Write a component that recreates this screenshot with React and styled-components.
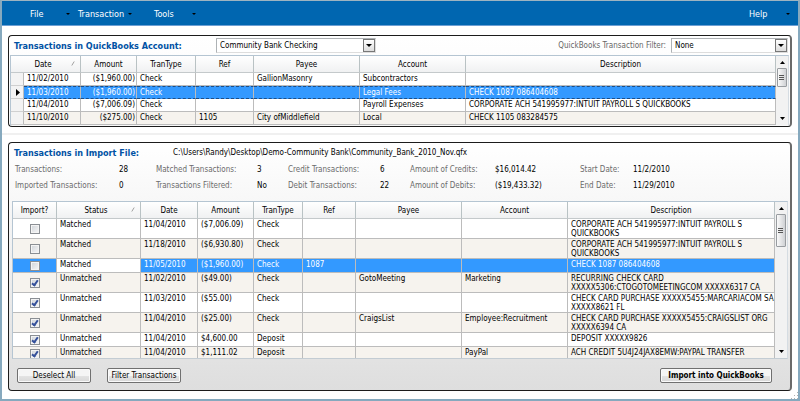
import React from "react";
import styled, { createGlobalStyle } from "styled-components";

const GlobalStyle = createGlobalStyle`
  *, *::before, *::after { box-sizing: border-box; }
  html, body, #root { height: 100%; }
  body {
    margin: 0;
    overflow: hidden;
    color: #000;
    font: 8px/9px "DejaVu Sans Condensed", "Noto Sans", Tahoma, sans-serif;
  }
  button, input, select { font: inherit; color: inherit; margin: 0; }
`;

const Window = styled.div`
  display: flex;
  flex-direction: column;
  height: 100vh;
  background: #fff;
  border: 2px solid #86a9be;
  border-top: 1px solid #9db4c1;
`;

const MenuBar = styled.nav`
  display: flex;
  flex: none;
  height: 25px;
  padding: 1px 8px 0 28px;
  background: #0066b0;
  border-bottom: 1px solid #6d9fd4;
`;

const MenuButton = styled.button`
  display: flex;
  align-items: center;
  justify-content: space-between;
  width: ${(p) => p.$width}px;
  margin-left: ${(p) => (p.$end ? "auto" : "0")};
  margin-right: ${(p) => p.$gap || 0}px;
  padding: 0;
  border: 0;
  background: none;
  color: #fff;
  font-size: 9px;
  line-height: 12px;
`;

const MenuItems = styled.div`
  display: flex;
`;

const Caret = styled.svg`
  width: ${(p) => p.$size || 5}px;
  height: ${(p) => (p.$size === 4 ? 2 : 3)}px;
  flex: none;
  fill: #000;
`;

const Content = styled.main`
  display: flex;
  flex: 1;
  flex-direction: column;
  min-height: 0;
`;

const AccountSection = styled.section`
  flex: none;
  padding: 9px 6px 6px;
  border-bottom: 2px solid #f0f0f0;
`;

const ImportSection = styled.section`
  display: flex;
  flex: 1;
  min-height: 0;
  padding: 7px 6px 8px;
`;

const Panel = styled.div`
  display: flex;
  flex: 1;
  flex-direction: column;
  min-width: 0;
  border: 1px solid #1c1c1c;
  border-right: 2px solid #6a6a6a;
  border-radius: 4px;
  background: linear-gradient(#fff, ${(p) => p.$shade});
`;

const PanelHead = styled.div`
  display: flex;
  align-items: center;
  height: 19px;
  padding: 0 2px 0 5px;
`;

const Title = styled.h2`
  width: ${(p) => p.$width}px;
  margin: 0;
  color: #0052a4;
  font-size: 9px;
  line-height: 12px;
`;

const FilterLabel = styled.label`
  margin-left: auto;
  padding-right: 5px;
  color: #666;
`;

const SelectBox = styled.span`
  display: grid;
  width: ${(p) => p.$width}px;
  height: 15px;
  border: 1px solid #aeb2b5;
  border-right-color: #ddd;
  border-bottom-color: #ddd;
  background: #fff;

  > * { grid-area: 1 / 1; }
`;

const Select = styled.select`
  appearance: none;
  width: 100%;
  padding: 0 16px 0 3px;
  border: 0;
  border-radius: 0;
  background: none;
`;

const SelectArrow = styled.span`
  display: grid;
  place-items: center;
  justify-self: end;
  width: 12px;
  height: 13px;
  border: 1px solid #777;
  background: linear-gradient(#fff, #ddd);
  pointer-events: none;
`;

const GridFrame = styled.div`
  display: flex;
  flex: ${(p) => (p.$fill ? "1" : "none")};
  min-height: 0;
  margin: ${(p) => (p.$fill ? "0 2px 0 3px" : "0 1px")};
  overflow: hidden;
  border: 1px solid #b5c5d2;
  border-right-color: #d5dce2;
  border-bottom-color: ${(p) => (p.$fill ? "#c3ccd3" : "transparent")};
`;

const TableWrap = styled.div`
  flex: 1;
  min-width: 0;
`;

const Table = styled.table`
  width: 100%;
  table-layout: fixed;
  border-spacing: 0;
`;

const Col = styled.col`
  width: ${(p) => (p.$width ? `${p.$width}px` : "auto")};
`;

const HeadCell = styled.th`
  position: relative;
  height: 17px;
  padding: 0 ${(p) => p.$inset}px 0 0;
  border-right: ${(p) => (p.$blank ? "0" : "1px solid #b9c2c4")};
  border-bottom: 1px solid #c4c9cb;
  background: linear-gradient(#fff, #f0f1f2);
  font-weight: normal;
  text-align: center;
`;

const SortMark = styled.svg`
  position: absolute;
  right: 5px;
  top: 5px;
  width: 4px;
  height: 5px;
  stroke: #8a8a8a;
`;

const Row = styled.tr`
  background: ${(p) => (p.$selected ? "#3399ff" : p.$tint ? "#f6f3ee" : "#fff")};
  color: ${(p) => (p.$selected ? "#fff" : "#000")};
`;

const Cell = styled.td`
  height: ${(p) => p.$height}px;
  padding: 1px 1px 0 3px;
  border-right: 1px solid #bcbcbc;
  border-bottom: 1px solid #bcbcbc;
  text-align: ${(p) => p.$align || "left"};
  vertical-align: top;
  white-space: pre;
  ${(p) => p.$plain && "background: #fff; color: #000;"}
  ${(p) => p.$focus && `
    border-top: 1px dashed #1d4e86;
    border-bottom: 1px dashed #1d4e86;
  `}
`;

const Selector = styled.td`
  height: 13px;
  padding: 0 0 0 5px;
  border-right: 1px solid #bcbcbc;
  border-bottom: 1px solid #d0d0d0;
  background: #f3f3f3;
  line-height: 0;
  vertical-align: middle;
`;

const Pointer = styled.svg`
  width: 4px;
  height: 7px;
`;

const CheckCell = styled.td`
  padding: 0;
  border-right: 1px solid #bcbcbc;
  border-bottom: 1px solid #bcbcbc;
  line-height: 0;
  text-align: center;
  vertical-align: middle;
`;

const CheckBox = styled.input`
  appearance: none;
  display: inline-grid;
  place-items: center;
  width: 10px;
  height: 10px;
  border: 1px solid #8b8f94;
  background: linear-gradient(135deg, #cfd3d8, #f8f8f8);
  box-shadow: inset 0 0 0 1px #f4f4f4;
  vertical-align: middle;

  &:checked::before {
    content: "";
    width: 4px;
    height: 7px;
    border: solid #34509a;
    border-width: 0 2px 2px 0;
    transform: rotate(35deg);
  }
`;

const ScrollTrack = styled.div`
  display: flex;
  flex: none;
  flex-direction: column;
  align-items: center;
  width: 12px;
  padding: 5px 0;
  background: #f2f2f2;
`;

const ScrollThumb = styled.div`
  display: grid;
  place-items: center;
  width: 10px;
  height: ${(p) => p.$height}px;
  margin: 4px 0 auto;
  border: 1px solid #989ca0;
  border-radius: 1px;
  background: linear-gradient(90deg, #fafafa, #cfd1d4);
`;

const Stats = styled.dl`
  display: grid;
  grid-template-columns: 104px 37px 101px 31px 92px 30px 85px 85px 53px auto;
  grid-auto-rows: 16px;
  margin: 0 0 7px;
  padding-left: 6px;
  line-height: 16px;
`;

const StatLabel = styled.dt`
  color: #6b6b6b;
`;

const StatValue = styled.dd`
  margin: 0;
`;

const Actions = styled.div`
  display: flex;
  gap: 16px;
  padding: 9px 18px 7px 8px;
`;

const ActionButton = styled.button`
  width: ${(p) => p.$width}px;
  height: 15px;
  margin-left: ${(p) => (p.$primary ? "auto" : "0")};
  padding: 0;
  border: 1px solid #707070;
  border-radius: 2px;
  background: linear-gradient(#f5f5f5 50%, #e4e4e4 50%, #d8d8d8);
  box-shadow: inset 0 0 0 1px #fafafa;
  font-weight: ${(p) => (p.$primary ? "bold" : "normal")};
  white-space: nowrap;
`;

const ResizeCorner = styled.div`
  position: absolute;
  right: 2px;
  bottom: 2px;
  line-height: 0;
`;

const Grip = styled.svg`
  width: 7px;
  height: 7px;
  fill: #b0b0b0;
`;

const Down = ({ size }) => (
  <Caret $size={size} viewBox="0 0 6 3" preserveAspectRatio="none" aria-hidden="true"><path d="M0 0h6L3 3z" /></Caret>
);
const Up = () => (
  <Caret viewBox="0 0 6 3" preserveAspectRatio="none" aria-hidden="true"><path d="M0 3h6L3 0z" /></Caret>
);

function ScrollBar({ thumb }) {
  return (
    <ScrollTrack>
      <Up />
      <ScrollThumb $height={thumb}>
        <svg width="6" height="7" aria-hidden="true">
          <path d="M0 1.5h5M0 3.5h5M0 5.5h5" stroke="#555" />
        </svg>
      </ScrollThumb>
      <Down />
    </ScrollTrack>
  );
}

function Head({ labels, sorted, inset }) {
  return (
    <thead>
      <tr>
        {labels.map((label, i) => (
          <HeadCell key={i} scope="col" $inset={label === sorted ? inset : 0} $blank={!label}>
            {label}
            {label === sorted && (
              <SortMark viewBox="0 0 5 6" aria-hidden="true"><path d="M1 5.5L4 .5" fill="none" /></SortMark>
            )}
          </HeadCell>
        ))}
      </tr>
    </thead>
  );
}

function ComboBox({ id, label, width, value }) {
  return (
    <SelectBox $width={width}>
      <Select id={id} aria-label={label} defaultValue={value}>
        <option>{value}</option>
      </Select>
      <SelectArrow><Down size={6} /></SelectArrow>
    </SelectBox>
  );
}

const accountRows = [
  ["11/02/2010", "($1,960.00)", "Check", "", "GallionMasonry", "Subcontractors", ""],
  ["11/03/2010", "($1,960.00)", "Check", "", "", "Legal Fees", "CHECK 1087 086404608"],
  ["11/04/2010", "($7,006.09)", "Check", "", "", "Payroll Expenses", "CORPORATE ACH 541995977:INTUIT PAYROLL S QUICKBOOKS"],
  ["11/10/2010", "($275.00)", "Check", "1105", "City ofMiddlefield", "Local", "CHECK 1105 083284575"],
];

const importRows = [
  [false, "Matched", "11/04/2010", "($7,006.09)", "Check", "", "", "", "CORPORATE ACH 541995977:INTUIT PAYROLL S\nQUICKBOOKS"],
  [false, "Matched", "11/18/2010", "($6,930.80)", "Check", "", "", "", "CORPORATE ACH 541995977:INTUIT PAYROLL S\nQUICKBOOKS"],
  [false, "Matched", "11/05/2010", "($1,960.00)", "Check", "1087", "", "", "CHECK 1087 086404608"],
  [true, "Unmatched", "11/02/2010", "($49.00)", "Check", "", "GotoMeeting", "Marketing", "RECURRING CHECK CARD\nXXXXX5306:CTOGOTOMEETINGCOM XXXXX6317 CA"],
  [true, "Unmatched", "11/03/2010", "($55.00)", "Check", "", "", "", "CHECK CARD PURCHASE XXXXX5455:MARCARIACOM SA\nXXXXX8621 FL"],
  [true, "Unmatched", "11/04/2010", "($25.00)", "Check", "", "CraigsList", "Employee:Recruitment", "CHECK CARD PURCHASE XXXXX5455:CRAIGSLIST ORG\nXXXXX6394 CA"],
  [true, "Unmatched", "11/04/2010", "$4,600.00", "Deposit", "", "", "", "DEPOSIT XXXXX9826"],
  [true, "Unmatched", "11/04/2010", "$1,111.02", "Deposit", "", "", "PayPal", "ACH CREDIT 5U4J24JAX8EMW:PAYPAL TRANSFER"],
];

const stats = [
  ["Transactions:", "28"], ["Matched Transactions:", "3"], ["Credit Transactions:", "6"],
  ["Amount of Credits:", "$16,014.42"], ["Start Date:", "11/2/2010"],
  ["Imported Transactions:", "0"], ["Transactions Filtered:", "No"], ["Debit Transactions:", "22"],
  ["Amount of Debits:", "($19,433.32)"], ["End Date:", "11/29/2010"],
];

const accountCols = [13, 57, 56, 59, 58, 106, 106, 0];
const importCols = [44, 84, 57, 56, 49, 53, 106, 106, 0];

export default function App() {
  return (
    <Window>
      <GlobalStyle />
      <MenuBar>
        <MenuItems>
          <MenuButton $width={40} $gap={8}>File<Down size={4} /></MenuButton>
          <MenuButton $width={54} $gap={22}>Transaction<Down size={4} /></MenuButton>
          <MenuButton $width={42}>Tools<Down size={4} /></MenuButton>
        </MenuItems>
        <MenuButton $end $width={41}>Help<Down size={4} /></MenuButton>
      </MenuBar>
      <Content>
        <AccountSection>
          <Panel $shade="#f8f8f8">
            <PanelHead>
              <Title $width={202}>Transactions in QuickBooks Account:</Title>
              <ComboBox label="QuickBooks account" width={160} value="Community Bank Checking" />
              <FilterLabel htmlFor="filter">QuickBooks Transaction Filter:</FilterLabel>
              <ComboBox id="filter" width={117} value="None" />
            </PanelHead>
            <GridFrame>
              <TableWrap>
                <Table>
                  <colgroup>{accountCols.map((w, i) => <Col key={i} $width={w} />)}</colgroup>
                  <Head
                    labels={["", "Date", "Amount", "TranType", "Ref", "Payee", "Account", "Description"]}
                    sorted="Date"
                    inset={18}
                  />
                  <tbody>
                    {accountRows.map((row, r) => (
                      <Row key={r} $selected={r === 1} $tint={r === 3}>
                        <Selector>
                          {r === 1 && <Pointer viewBox="0 0 4 7" aria-label="Current row"><path d="M0 0l4 3.5L0 7z" /></Pointer>}
                        </Selector>
                        {row.map((text, c) => (
                          <Cell key={c} $height={13} $align={c === 1 ? "right" : "left"} $focus={r === 1}>{text}</Cell>
                        ))}
                      </Row>
                    ))}
                  </tbody>
                </Table>
              </TableWrap>
              <ScrollBar thumb={19} />
            </GridFrame>
          </Panel>
        </AccountSection>
        <ImportSection>
          <Panel $shade="#dedede">
            <PanelHead>
              <Title $width={159}>Transactions in Import File:</Title>
              <span>C:\Users\Randy\Desktop\Demo-Community Bank\Community_Bank_2010_Nov.qfx</span>
            </PanelHead>
            <Stats>
              {stats.map(([label, value]) => (
                <React.Fragment key={label}>
                  <StatLabel>{label}</StatLabel>
                  <StatValue>{value}</StatValue>
                </React.Fragment>
              ))}
            </Stats>
            <GridFrame $fill>
              <TableWrap>
                <Table>
                  <colgroup>{importCols.map((w, i) => <Col key={i} $width={w} />)}</colgroup>
                  <Head
                    labels={["Import?", "Status", "Date", "Amount", "TranType", "Ref", "Payee", "Account", "Description"]}
                    sorted="Status"
                    inset={5}
                  />
                  <tbody>
                    {importRows.map(([checked, ...row], r) => (
                      <Row key={r} $selected={r === 2} $tint={r % 2 === 1}>
                        <CheckCell>
                          <CheckBox type="checkbox" defaultChecked={checked} aria-label={`Import row ${r + 1}`} />
                        </CheckCell>
                        {row.map((text, c) => (
                          <Cell key={c} $height={row[7].includes("\n") ? 20 : 14} $plain={r === 2 && c === 0}>
                            {text}
                          </Cell>
                        ))}
                      </Row>
                    ))}
                  </tbody>
                </Table>
              </TableWrap>
              <ScrollBar thumb={33} />
            </GridFrame>
            <Actions>
              <ActionButton $width={74}>Deselect All</ActionButton>
              <ActionButton $width={74}>Filter Transactions</ActionButton>
              <ActionButton $primary $width={112}>Import into QuickBooks</ActionButton>
            </Actions>
          </Panel>
        </ImportSection>
      </Content>
      <ResizeCorner>
        <Grip viewBox="0 0 7 7" aria-hidden="true">
          <path d="M6 0h1v1h-1zM6 3h1v1h-1zM6 6h1v1h-1zM3 3h1v1h-1zM3 6h1v1h-1zM0 6h1v1h-1z" />
        </Grip>
      </ResizeCorner>
    </Window>
  );
}
